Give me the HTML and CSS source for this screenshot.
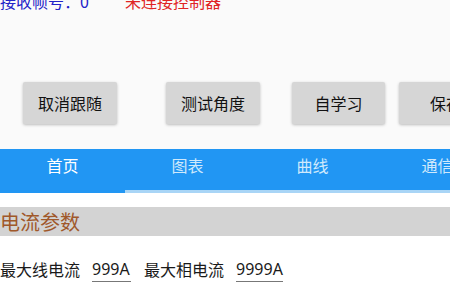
FILE: index.html
```html
<!DOCTYPE html>
<html lang="zh">
<head>
<meta charset="utf-8">
<link rel="stylesheet" href="styles.css">
</head>
<body>
<div class="page">
  <div class="top">
    <div class="status">
      <span class="recv">接收帧号：0</span>
      <span class="conn">未连接控制器</span>
    </div>
    <div class="buttons">
      <div class="btn b1">取消跟随</div>
      <div class="btn b2">测试角度</div>
      <div class="btn b3">自学习</div>
      <div class="btn b4">保存</div>
    </div>
  </div>
  <div class="tabs">
    <div class="tab active">首页</div>
    <div class="tab">图表</div>
    <div class="tab">曲线</div>
    <div class="tab">通信</div>
  </div>
  <div class="section">电流参数</div>
  <div class="row">
    <span class="label">最大线电流</span>
    <span class="value v1">999A</span>
    <span class="label l2">最大相电流</span>
    <span class="value v2">9999A</span>
  </div>
</div>
</body>
</html>
```

FILE: styles.css
```css
html, body {
  margin: 0;
  padding: 0;
  background: #ffffff;
}
.page {
  width: 450px;
  height: 300px;
  overflow: hidden;
  font-family: "Noto Sans CJK SC", "Noto Sans", sans-serif;
}
.top {
  background: #fafafa;
  height: 149px;
  overflow: hidden;
}
.status {
  margin-top: -9px;
  height: 20px;
  line-height: 20px;
  font-size: 16px;
  white-space: nowrap;
  display: flex;
}
.recv {
  color: #2323c8;
  width: 125px;
}
.conn {
  color: #e02424;
}
.buttons {
  display: flex;
  margin-top: 71px;
  white-space: nowrap;
}
.btn {
  flex: none;
  width: 94px;
  height: 42px;
  line-height: 42px;
  background: #d6d6d6;
  border-radius: 2px;
  box-shadow: 0 1px 3px rgba(0, 0, 0, 0.25);
  text-align: center;
  font-size: 16px;
  color: #111;
  font-weight: 400;
}
.b1 { margin-left: 23px; }
.b2 { margin-left: 49px; }
.b3 { margin-left: 32px; width: 93px; }
.b4 { margin-left: 14px; text-align: left; padding-left: 31px; box-sizing: border-box; }
.tabs {
  display: flex;
  height: 44px;
  background: #2196f3;
  box-sizing: border-box;
  border-bottom: 3px solid #a9d5f6;
}
.tab {
  flex: none;
  width: 125px;
  text-align: center;
  font-size: 16px;
  line-height: 33px;
  color: #cfe9fc;
  white-space: nowrap;
}
.tab.active {
  color: #ffffff;
  box-shadow: 0 3px 0 #2196f3;
}
.section {
  margin-top: 14px;
  height: 29px;
  line-height: 29px;
  background: #d3d3d3;
  color: #a0582a;
  font-size: 20px;
}
.row {
  display: flex;
  align-items: flex-start;
  margin-top: 22px;
  font-size: 16px;
  line-height: 22px;
  color: #1a1a1a;
  white-space: nowrap;
}
.value {
  border-bottom: 1px solid #777;
  padding-bottom: 1px;
  font-family: "Noto Sans", sans-serif;
}
.v1 { margin-left: 12px; width: 39px; }
.l2 { margin-left: 13px; }
.v2 { margin-left: 12px; width: 47px; }
```
